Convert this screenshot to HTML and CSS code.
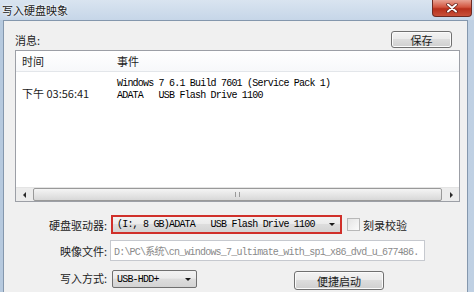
FILE: index.html
```html
<!DOCTYPE html>
<html>
	<head>
		<meta charset="UTF-8">
		<title>写入硬盘映象</title>
		<link rel="stylesheet" href="styles.css">
	</head>
	<body>
		<!--整个窗口-->
		<div class="window">
			<!--标题栏-->
			<div class="titlebar">
				<span class="title">写入硬盘映象</span>
				<span class="close">
					<svg width="14" height="10" viewBox="0 0 14 10">
						<path d="M3 1.5 L11 8.5 M11 1.5 L3 8.5" stroke="#5a1a14" stroke-width="3.4" stroke-linecap="round"/>
						<path d="M3 1.5 L11 8.5 M11 1.5 L3 8.5" stroke="#ffffff" stroke-width="2" stroke-linecap="round"/>
					</svg>
				</span>
			</div>

			<!--窗口内容-->
			<div class="client">
				<div class="msg-bar">
					<span class="msg-label">消息:</span>
					<span class="btn btn-save">保存</span>
				</div>

				<!--消息列表-->
				<div class="listview">
					<div class="lv-head">
						<span class="col-time">时间</span>
						<span class="col-event">事件</span>
					</div>
					<div class="lv-body">
						<div class="lv-row">
							<span class="col-time">&nbsp;</span>
							<span class="col-event mono">Windows 7 6.1 Build 7601 (Service Pack 1)</span>
						</div>
						<div class="lv-row">
							<span class="col-time">下午 03:56:41</span>
							<span class="col-event mono">ADATA   USB Flash Drive 1100</span>
						</div>
					</div>
					<!--横向滚动条-->
					<div class="hscroll">
						<span class="sb-arrow"><span class="tri-left"></span></span>
						<span class="sb-thumb"><span class="grip"></span></span>
						<span class="sb-arrow"><span class="tri-right"></span></span>
					</div>
				</div>

				<!--下面的设置-->
				<div class="form">
					<div class="form-row row-drive">
						<span class="label">硬盘驱动器:</span>
						<span class="combo combo-drive">
							<span class="combo-text mono">(I:, 8 GB)ADATA   USB Flash Drive 1100</span>
							<span class="combo-arrow"></span>
						</span>
						<span class="checkbox"></span>
						<span class="check-label">刻录校验</span>
					</div>
					<div class="form-row row-file">
						<span class="label">映像文件:</span>
						<span class="textbox mono">D:\PC\系统\cn_windows_7_ultimate_with_sp1_x86_dvd_u_677486.</span>
					</div>
					<div class="form-row row-mode">
						<span class="label">写入方式:</span>
						<span class="combo combo-mode">
							<span class="combo-text mono">USB-HDD+</span>
							<span class="combo-arrow"></span>
						</span>
						<span class="btn btn-boot">便捷启动</span>
					</div>
				</div>
			</div>
		</div>
	</body>
</html>
```

FILE: styles.css
```css
*{
	margin: 0;
	padding: 0;
	box-sizing: border-box;
}

body{
	width: 474px;
	height: 292px;
	overflow: hidden;
	font-family: "Noto Sans CJK SC", "Liberation Sans", sans-serif;
	font-size: 11px;
	color: #1c1c1c;
}

/*窗口外框 浅蓝色*/
.window{
	width: 474px;
	height: 292px;
	background: linear-gradient(to right, #b6c9de, #c9d8e8 40%, #bfd0e3);
	display: flex;
	flex-direction: column;
}

.titlebar{
	height: 20px;
	display: flex;
	align-items: flex-start;
	justify-content: space-between;
	background: linear-gradient(#d9e4f0, #c6d6e8);
}

.title{
	padding: 2px 0 0 2px;
	line-height: 16px;
	color: #1a1a1a;
	text-shadow: 0 0 4px #ffffff, 0 0 2px #ffffff;
}

/*关闭按钮*/
.close{
	width: 40px;
	height: 17px;
	margin-right: 2px;
	display: flex;
	align-items: center;
	justify-content: center;
	background: linear-gradient(#e8a293, #d2553f 45%, #b7301c 55%, #c8503a);
	border: 1px solid #6e2a22;
	border-top: none;
	border-radius: 0 0 4px 4px;
}

/*内容区*/
.client{
	flex: 1;
	margin: 0 6px 0 3px;
	background-color: #f0f0f0;
	border: 1px solid #8497ad;
	border-bottom: none;
}

.msg-bar{
	height: 17px;
	margin-top: 10px;
	padding: 0 15px 0 11px;
	display: flex;
	align-items: center;
	justify-content: space-between;
}

.msg-label{
	line-height: 17px;
	margin-top: 2px;
}

/*按钮*/
.btn{
	display: flex;
	align-items: center;
	justify-content: center;
	border: 1px solid #707070;
	border-radius: 3px;
	background: linear-gradient(#f3f3f3, #ebebeb 45%, #dddddd 50%, #cfcfcf);
	box-shadow: inset 0 0 0 1px #fbfbfb;
	color: #1c1c1c;
}

.btn-save{
	width: 61px;
	height: 17px;
}

/*列表*/
.listview{
	margin: 2px 7px 0 11px;
	height: 152px;
	border: 1px solid #9c9fa6;
	background-color: #ffffff;
	display: flex;
	flex-direction: column;
}

.lv-head{
	height: 21px;
	display: flex;
	align-items: center;
	border-bottom: 1px solid #e3e6ea;
	background: linear-gradient(#ffffff, #f7f8fa);
}

.col-time{
	width: 101px;
	padding-left: 6px;
	flex-shrink: 0;
}

.col-event{
	padding-left: 0;
}

.lv-body{
	flex: 1;
	padding-top: 3px;
}

.lv-row{
	height: 12px;
	line-height: 12px;
	display: flex;
	align-items: baseline;
}

/*等宽字体 模仿宋体的英文*/
.mono{
	font-family: "Liberation Mono", "Noto Sans CJK SC", monospace;
	font-size: 10px;
	letter-spacing: -0.8px;
	white-space: pre;
	color: #000000;
}

/*滚动条*/
.hscroll{
	height: 14px;
	display: flex;
	align-items: stretch;
	background-color: #ececec;
	border-top: 1px solid #e4e4e4;
}

.sb-arrow{
	width: 16px;
	display: flex;
	align-items: center;
	justify-content: center;
}

.tri-left{
	width: 0;
	height: 0;
	border-top: 3px solid transparent;
	border-bottom: 3px solid transparent;
	border-right: 3px solid #2a2a2a;
}

.tri-right{
	width: 0;
	height: 0;
	border-top: 3px solid transparent;
	border-bottom: 3px solid transparent;
	border-left: 3px solid #2a2a2a;
}

.sb-thumb{
	flex: 1;
	margin: 0 1px;
	border: 1px solid #999999;
	border-radius: 2px;
	background: linear-gradient(#f4f4f4, #e6e6e6 50%, #d8d8d8);
	display: flex;
	align-items: center;
	justify-content: center;
}

.grip{
	width: 5px;
	height: 5px;
	border-left: 1px solid #9a9a9a;
	border-right: 1px solid #9a9a9a;
}

/*下面的表单*/
.form{
	padding-top: 13px;
}

.form-row{
	display: flex;
	align-items: center;
}

.label{
	width: 103px;
	text-align: right;
	flex-shrink: 0;
	color: #1c1c1c;
}

.combo{
	height: 19px;
	display: flex;
	align-items: center;
	justify-content: space-between;
	border: 1px solid #707070;
	border-radius: 2px;
	background: linear-gradient(#f2f2f2, #ebebeb 45%, #dddddd 50%, #d3d3d3);
	padding: 0 5px 0 4px;
}

.combo-arrow{
	width: 0;
	height: 0;
	border-left: 3px solid transparent;
	border-right: 3px solid transparent;
	border-top: 3px solid #1a1a1a;
}

/*红色框 突出显示*/
.combo-drive{
	width: 231px;
	margin-left: 4px;
	border: 2px solid #d0302a;
	border-radius: 0;
}

.checkbox{
	width: 13px;
	height: 13px;
	margin-left: 5px;
	border: 1px solid #b8b8b8;
	background: linear-gradient(135deg, #e4e4e4, #fbfbfb);
}

.check-label{
	margin-left: 3px;
}

.row-file{
	margin-top: 6px;
}

.textbox{
	width: 315px;
	height: 21px;
	margin-left: 3px;
	padding-left: 3px;
	display: flex;
	align-items: center;
	border: 1px solid #c6c9cf;
	background-color: #ffffff;
	color: #8a8a8a;
	overflow: hidden;
}

.row-mode{
	margin-top: 9px;
	align-items: flex-start;
}

.combo-mode{
	width: 85px;
	height: 18px;
	margin-left: 5px;
}

.btn-boot{
	width: 90px;
	height: 19px;
	margin: 1px 0 0 97px;
}
```
